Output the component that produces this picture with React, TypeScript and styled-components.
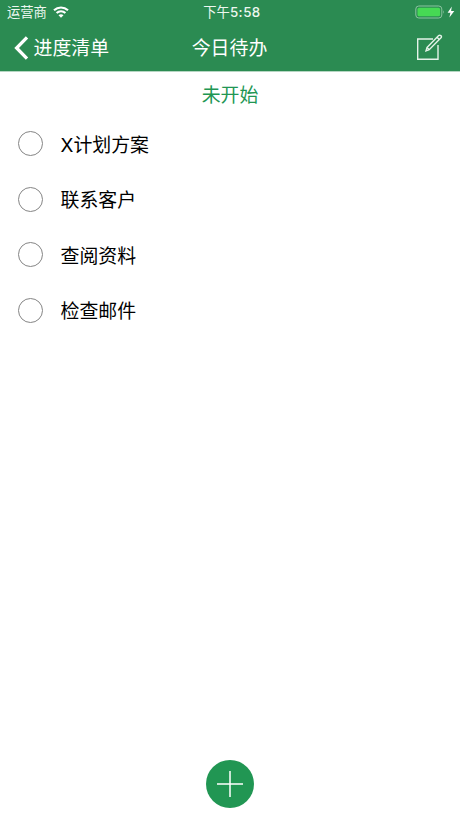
import React from 'react';
import styled, { createGlobalStyle } from 'styled-components';

const GlobalStyle = createGlobalStyle`
  *, *::before, *::after { box-sizing: border-box; }
  body {
    margin: 0;
    background: #fff;
    font-family: Inter, "Noto Sans CJK SC", sans-serif;
    -webkit-font-smoothing: antialiased;
  }
  button { font: inherit; color: inherit; border: 0; padding: 0; background: none; }
  svg { display: block; flex: none; }
`;

const Screen = styled.div`
  display: flex;
  flex-direction: column;
  width: 460px;
  height: 818px;
  overflow: hidden;
  background: #fff;
`;

const Header = styled.header`
  flex: none;
  height: 71px;
  background: #2b8b52;
  box-shadow: 0 1px 0 #b5d6c2;
  color: #fff;
`;

const StatusBar = styled.div`
  display: grid;
  grid-template-columns: 1fr auto 1fr;
  align-items: center;
  height: 24px;
  padding: 0 5px 0 7px;
  font-size: 13.3px;
  line-height: 24px;
  color: #edf7f0;
`;

const Carrier = styled.div`
  display: flex;
  align-items: center;
  gap: 6px;
`;

const Clock = styled.div`
  letter-spacing: 0.5px;
  font-weight: 500;
  padding-left: 2px;
`;

const ClockPeriod = styled.span`
  font-weight: 400;
  letter-spacing: 0;
`;

const Power = styled.div`
  display: flex;
  justify-content: flex-end;
`;

const NavBar = styled.nav`
  display: grid;
  grid-template-columns: 1fr auto 1fr;
  align-items: center;
  height: 47px;
  padding: 0 17.5px 0 14px;
  font-size: 18.9px;
  line-height: 28px;
`;

const BackButton = styled.button`
  display: flex;
  align-items: center;
  gap: 4.5px;
`;

const Label = styled.span`
  padding-top: 2px;
`;

const Title = styled.h1`
  margin: 0;
  padding: 2px 0 0 2.5px;
  font-size: 18.9px;
  font-weight: 400;
  line-height: 28px;
`;

const EditButton = styled.button`
  justify-self: end;
`;

const SectionTitle = styled.h2`
  flex: none;
  margin: 0;
  height: 45px;
  font-size: 18.9px;
  font-weight: 400;
  line-height: 50px;
  text-align: center;
  color: #219653;
`;

const TaskList = styled.ul`
  flex: 1;
  margin: 0;
  padding: 0;
  list-style: none;
`;

const Task = styled.li`
  display: flex;
  align-items: center;
  gap: 17.5px;
  height: 55.5px;
  padding-left: 18px;
  font-size: 18.9px;
  line-height: 28px;
  color: #000;
`;

const TaskName = styled.span`
  padding-top: 4px;
`;

const Check = styled.button`
  width: 25px;
  height: 25px;
  border: 1px solid #858585;
  border-radius: 50%;
`;

const Footer = styled.footer`
  display: flex;
  justify-content: center;
  flex: none;
  height: 58px;
`;

const AddButton = styled.button`
  display: grid;
  place-items: center;
  width: 48px;
  height: 48px;
  border-radius: 50%;
  background: #219653;
  color: #fff;
`;

const tasks = ['X计划方案', '联系客户', '查阅资料', '检查邮件'];

const WifiIcon = () => (
  <svg width="16" height="12" viewBox="0 0 16 12" fill="none" stroke="#fff" strokeWidth="2.1">
    <path d="M1 4.3C5 .5 11 .5 15 4.3" />
    <path d="M3.6 7.1C6.1 4.7 9.9 4.7 12.4 7.1" />
    <path d="M8 11.8L5.5 9.2C6.9 7.9 9.1 7.9 10.5 9.2Z" fill="#fff" stroke="none" />
  </svg>
);

const BatteryIcon = () => (
  <svg width="40" height="14" viewBox="0 0 40 14" fill="none">
    <rect x=".8" y="1" width="26" height="12" rx="3" stroke="#8cc4a0" />
    <rect x="2.5" y="2.7" width="22.6" height="8.6" rx="1.6" fill="#46d954" />
    <path d="M28.2 5.2Q29.8 7 28.2 8.8Z" fill="#8cc4a0" />
    <path d="M36.8 1.4L32.6 7.7H35.4L34.4 12.6L39.3 6.1H36.1Z" fill="#fff" />
  </svg>
);

const BackIcon = () => (
  <svg width="15" height="24" viewBox="0 0 15 24" fill="none" stroke="#fff" strokeWidth="3.3">
    <path d="M13 1.3L2.6 12L13 22.7" />
  </svg>
);

const EditIcon = () => (
  <svg width="27" height="27" viewBox="0 0 27 27" fill="none" stroke="#e5f3e9" strokeWidth="1.4">
    <path d="M17 5H1.7V25.3H22V11" />
    <path d="M11 13.5L22.7 1.6Q23.7 .7 24.8 1.6Q26 2.7 25 3.8L13.2 15.7L10 16.8Z" />
    <path d="M21 3.3L23.3 5.5M11 13.5L13.2 15.7" />
  </svg>
);

const PlusIcon = () => (
  <svg width="28" height="28" viewBox="0 0 28 28" stroke="#fff" strokeWidth="1.5">
    <path d="M1 14H27M14 1V27" />
  </svg>
);

export default function App() {
  return (
    <Screen>
      <GlobalStyle />
      <Header>
        <StatusBar>
          <Carrier>运营商<WifiIcon /></Carrier>
          <Clock><ClockPeriod>下午</ClockPeriod>5:58</Clock>
          <Power><BatteryIcon /></Power>
        </StatusBar>
        <NavBar>
          <BackButton><BackIcon /><Label>进度清单</Label></BackButton>
          <Title>今日待办</Title>
          <EditButton aria-label="编辑"><EditIcon /></EditButton>
        </NavBar>
      </Header>
      <SectionTitle>未开始</SectionTitle>
      <TaskList>
        {tasks.map((task) => (
          <Task key={task}><Check aria-label={task} /><TaskName>{task}</TaskName></Task>
        ))}
      </TaskList>
      <Footer>
        <AddButton aria-label="添加"><PlusIcon /></AddButton>
      </Footer>
    </Screen>
  );
}
